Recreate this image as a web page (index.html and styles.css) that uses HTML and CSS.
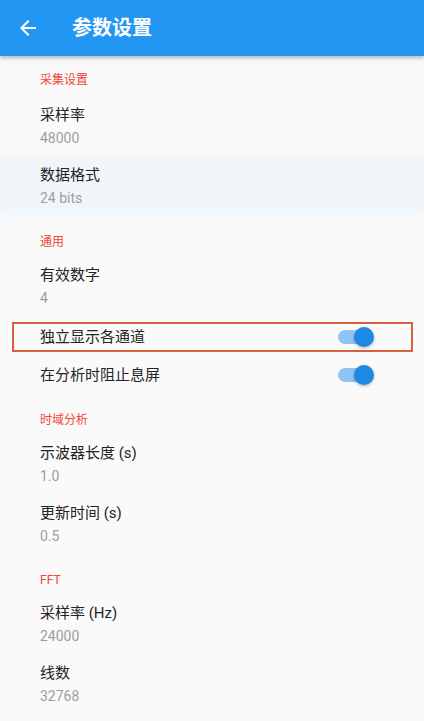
FILE: index.html
```html
<!DOCTYPE html>
<html lang="zh-CN">

<head>
    <meta charset="UTF-8">
    <meta name="viewport" content="width=device-width, initial-scale=1.0">
    <title>参数设置</title>
    <link rel="stylesheet" href="styles.css">
</head>

<body>

    <header class="app-bar">
        <svg class="back" viewBox="0 0 24 24" width="24" height="24">
            <path d="M20 11H7.83l5.59-5.59L12 4l-8 8 8 8 1.41-1.41L7.83 13H20v-2z" fill="#fff"/>
        </svg>
        <h1>参数设置</h1>
    </header>

    <main class="settings">
        <div class="section">采集设置</div>
        <div class="item">
            <div class="title">采样率</div>
            <div class="value">48000</div>
        </div>
        <div class="item active">
            <div class="title">数据格式</div>
            <div class="value">24 bits</div>
        </div>

        <div class="section">通用</div>
        <div class="item">
            <div class="title">有效数字</div>
            <div class="value">4</div>
        </div>
        <div class="toggles">
            <div class="toggle-row marked">
                <span class="title">独立显示各通道</span>
                <span class="switch on"><span class="thumb"></span></span>
            </div>
            <div class="toggle-row">
                <span class="title">在分析时阻止息屏</span>
                <span class="switch on"><span class="thumb"></span></span>
            </div>
        </div>

        <div class="section">时域分析</div>
        <div class="item">
            <div class="title">示波器长度 (s)</div>
            <div class="value">1.0</div>
        </div>
        <div class="item">
            <div class="title">更新时间 (s)</div>
            <div class="value">0.5</div>
        </div>

        <div class="section">FFT</div>
        <div class="item">
            <div class="title">采样率 (Hz)</div>
            <div class="value">24000</div>
        </div>
        <div class="item">
            <div class="title">线数</div>
            <div class="value">32768</div>
        </div>
    </main>

</body>

</html>
```

FILE: styles.css
```css
body {
    font-family: Roboto, "Noto Sans CJK SC", sans-serif;
    background-color: #fafafa;
    color: #222;
    margin: 0;
    padding: 0;
    height: 721px;
    overflow: hidden;
}

.app-bar {
    height: 56px;
    background-color: #2196f3;
    display: flex;
    align-items: center;
    padding-left: 16px;
    box-shadow: 0 2px 4px rgba(0, 0, 0, 0.28);
    position: relative;
    z-index: 1;
}

.back {
    display: block;
}

.app-bar h1 {
    margin: 0 0 0 32px;
    font-size: 20px;
    font-weight: 700;
    color: #fff;
    line-height: 24px;
}

.section {
    padding: 18px 40px 4px;
    font-size: 12px;
    line-height: 18px;
    color: #f44336;
}

.section:first-child {
    padding-top: 15px;
    padding-bottom: 6px;
}

.toggles + .section {
    padding-top: 17px;
}

.item {
    height: 60px;
    box-sizing: border-box;
    padding: 9px 40px 5px;
}

.item.active {
    background-color: #f1f6fa;
    border-radius: 4px;
}

.title {
    font-size: 15px;
    line-height: 22px;
    color: #242424;
}

.value {
    font-size: 14px;
    line-height: 24px;
    color: #9e9e9e;
}

.toggles {
    padding-top: 3px;
}

.toggle-row {
    height: 38px;
    display: flex;
    align-items: center;
    justify-content: space-between;
    padding: 0 50px 0 40px;
    position: relative;
}

.toggle-row.marked::after {
    content: "";
    position: absolute;
    left: 12px;
    right: 11px;
    top: 4px;
    bottom: 4px;
    border: 2px solid #d9603c;
}

.switch {
    width: 36px;
    height: 20px;
    position: relative;
    display: block;
}

.switch::before {
    content: "";
    position: absolute;
    left: 0;
    right: 4px;
    top: 3px;
    height: 14px;
    border-radius: 7px;
    background-color: #90c4f5;
}

.switch .thumb {
    position: absolute;
    right: 0;
    top: 0;
    width: 20px;
    height: 20px;
    border-radius: 50%;
    background-color: #1e88e5;
    box-shadow: 0 1px 3px rgba(0, 0, 0, 0.3);
}
```
